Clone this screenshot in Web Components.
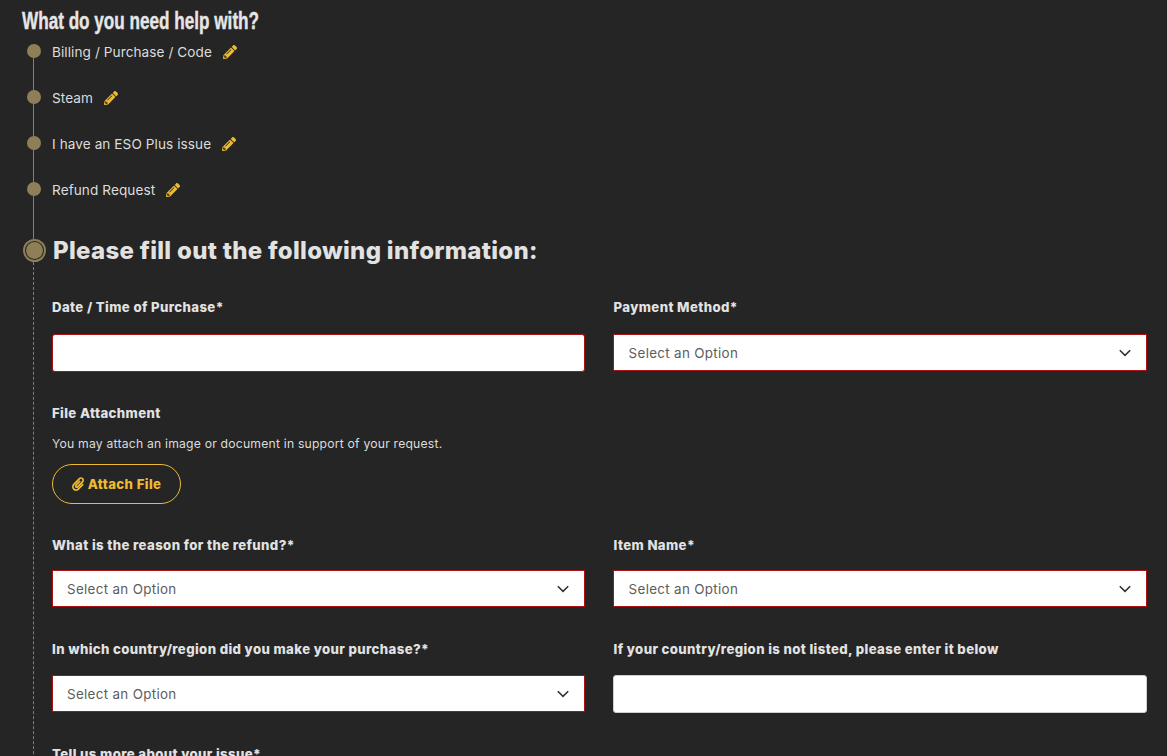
<!DOCTYPE html>
<html lang="en">
<head>
<meta charset="utf-8">
<title>What do you need help with?</title>
<style>
  html, body { margin: 0; height: 756px; overflow: hidden; background: #252525; }
  body { font-family: Inter, "Liberation Sans", sans-serif; color: #e2e2e2; }
</style>
</head>
<body>
<support-page>
  <tl-step>Billing / Purchase / Code</tl-step>
  <tl-step>Steam</tl-step>
  <tl-step>I have an ESO Plus issue</tl-step>
  <tl-step>Refund Request</tl-step>
  <tl-section title="Please fill out the following information:">
    <form-row top="0">
      <form-field label="Date / Time of Purchase*"><text-box invalid></text-box></form-field>
      <form-field label="Payment Method*"><select-box></select-box></form-field>
    </form-row>
    <attach-block></attach-block>
    <form-row top="33">
      <form-field gap="17" label="What is the reason for the refund?*"><select-box></select-box></form-field>
      <form-field gap="17" label="Item Name*"><select-box></select-box></form-field>
    </form-row>
    <form-row top="34">
      <form-field gap="18" label="In which country/region did you make your purchase?*"><select-box></select-box></form-field>
      <form-field gap="18" label="If your country/region is not listed, please enter it below"><text-box></text-box></form-field>
    </form-row>
    <form-row top="33">
      <form-field label="Tell us more about your issue*"><text-box invalid></text-box></form-field>
    </form-row>
  </tl-section>
</support-page>
<script>
const PENCIL = `<svg viewBox="0 0 512 512" width="14" height="14" fill="#edbb33"><path d="M497.9 142.1l-46.1 46.1c-4.7 4.7-12.3 4.7-17 0l-111-111c-4.7-4.7-4.7-12.3 0-17l46.1-46.1c18.7-18.7 49.1-18.7 67.9 0l60.1 60.1c18.8 18.7 18.8 49.1 0 67.9zM284.2 99.8L21.6 362.4.4 483.9c-2.9 16.4 11.4 30.6 27.8 27.8l121.5-21.3 262.6-262.6c4.7-4.7 4.7-12.3 0-17l-111-111c-4.8-4.7-12.4-4.7-17.1 0zM124.1 339.9c-5.5-5.5-5.5-14.3 0-19.8l154-154c5.5-5.5 14.3-5.5 19.8 0s5.5 14.3 0 19.8l-154 154c-5.5 5.5-14.3 5.5-19.8 0zM88 424h48v36.3l-64.5 11.3-31.1-31.1L51.7 376H88v48z"/></svg>`
const CLIP = `<svg viewBox="0 0 448 512" width="12" height="14" fill="#edbb33"><path d="M43.246 466.142c-58.43-60.289-57.341-157.511 1.386-217.581L254.392 34c44.316-45.332 116.351-45.336 160.671 0 43.89 44.894 43.943 117.329 0 162.276L232.214 383.128c-29.855 30.537-78.633 30.111-107.982-.998-28.275-29.97-27.368-77.473 1.452-106.953l143.743-146.835c6.182-6.314 16.312-6.422 22.626-.241l22.861 22.379c6.315 6.182 6.422 16.312.241 22.626L171.427 319.927c-4.932 5.045-5.236 13.428-.648 18.292 4.372 4.634 11.245 4.711 15.688.165l182.849-186.851c19.613-20.062 19.613-52.725-.011-72.798-19.189-19.627-49.957-19.637-69.154 0L90.39 293.295c-34.763 35.56-35.299 93.12-1.191 128.313 34.01 35.093 88.985 35.137 123.058.286l172.06-175.999c6.177-6.319 16.307-6.433 22.626-.256l22.877 22.364c6.319 6.177 6.434 16.307.256 22.626l-172.06 175.998c-59.576 60.938-155.943 60.216-214.77-.485z"/></svg>`

class SupportPage extends HTMLElement {
    constructor() {
        super();
        this.attachShadow({ mode: "open" });
        this.shadowRoot.innerHTML = /*html*/`
            <style>
                :host{ display:block; padding-right:20px; }
                h1{
                    margin:0 0 0 22px;
                    height:44px;
                    font:bold 23px/42px "Liberation Sans", sans-serif;
                    -webkit-text-stroke:.4px #e6e6e6;
                    color:#e6e6e6;
                    white-space:nowrap;
                    transform:scaleX(.745);
                    transform-origin:left center;
                }
            </style>
            <h1>What do you need help with?</h1>
            <slot></slot>
        `;
    }
}
customElements.define('support-page', SupportPage);

class TlStep extends HTMLElement {
    constructor() {
        super();
        this.attachShadow({ mode: "open" });
        this.shadowRoot.innerHTML = /*html*/`
            <style>
                :host{ display:flex; height:46px; margin-left:27px; gap:11px; }
                .gutter{ width:14px; display:flex; flex-direction:column; align-items:center; }
                .dot{ width:14px; height:14px; border-radius:50%; background:#8f7f57; flex:none; }
                .line{ width:1px; flex:1; background:#8f7f57; margin-right:1px; }
                .text{ display:flex; align-items:center; height:16px; font-size:13.6px; letter-spacing:.08px; color:#dcdcdc; gap:11px; }
                svg{ display:block; }
            </style>
            <div class="gutter"><div class="dot"></div><div class="line"></div></div>
            <div class="text"><span><slot></slot></span>${PENCIL}</div>
        `;
    }
}
customElements.define('tl-step', TlStep);

class TlSection extends HTMLElement {
    constructor() {
        super();
        this.attachShadow({ mode: "open" });
        this.shadowRoot.innerHTML = /*html*/`
            <style>
                :host{ display:grid; grid-template-columns:23px 1fr; margin-left:23px; column-gap:6px; }
                .stem{ grid-column:1; display:flex; flex-direction:column; align-items:flex-start; }
                .solid{ width:1px; height:11px; background:#8f7f57; margin-left:10px; }
                .ring{
                    width:23px; height:23px; box-sizing:border-box; border-radius:50%;
                    border:2px solid #8f7f57; padding:1px; flex:none;
                }
                .ring div{ width:100%; height:100%; border-radius:50%; background:#8f7f57; }
                .dash{ width:0; flex:1; border-left:1px dashed #8f7f57; margin-left:10px; }
                .body{ min-width:0; padding-top:11px; }
                h2{ margin:0 0 0 1px; font-size:24px; line-height:24px; font-weight:800; letter-spacing:.3px; color:#e2e2e2; white-space:nowrap; }
                .fields{ padding-top:36px; }
            </style>
            <div class="stem"><div class="solid"></div><div class="ring"><div></div></div><div class="dash"></div></div>
            <div class="body">
                <h2>${this.getAttribute("title")}</h2>
                <div class="fields"><slot></slot></div>
            </div>
        `;
    }
}
customElements.define('tl-section', TlSection);

class FormRow extends HTMLElement {
    constructor() {
        super();
        this.attachShadow({ mode: "open" });
        this.shadowRoot.innerHTML = /*html*/`
            <style>
                :host{ display:grid; grid-template-columns:533px 534px; column-gap:28px; }
                ::slotted(:nth-child(2)){ --nudge:.6px; }
            </style>
            <slot></slot>
        `;
        this.style.marginTop = (this.getAttribute("top") || 0) + "px";
    }
}
customElements.define('form-row', FormRow);

class FormField extends HTMLElement {
    constructor() {
        super();
        this.attachShadow({ mode: "open" });
        this.shadowRoot.innerHTML = /*html*/`
            <style>
                :host{ display:block; }
                label{ display:block; font-size:13.2px; line-height:16px; font-weight:800; letter-spacing:.38px; color:#e2e2e2; margin-bottom:${this.getAttribute("gap") || 19}px; padding-left:var(--nudge,0px); white-space:nowrap; }
            </style>
            <label>${this.getAttribute("label")}</label>
            <slot></slot>
        `;
    }
}
customElements.define('form-field', FormField);

class TextBox extends HTMLElement {
    constructor() {
        super();
        this.attachShadow({ mode: "open" });
        const border = this.hasAttribute("invalid") ? "#a81212" : "#cfcfcf";
        this.shadowRoot.innerHTML = /*html*/`
            <style>
                :host{ display:block; height:38px; box-sizing:border-box; background:#fff; border:1px solid ${border}; border-radius:3px; }
            </style>
        `;
    }
}
customElements.define('text-box', TextBox);

class SelectBox extends HTMLElement {
    constructor() {
        super();
        this.attachShadow({ mode: "open" });
        this.shadowRoot.innerHTML = /*html*/`
            <style>
                :host{
                    display:flex; align-items:center; justify-content:space-between;
                    height:37px; box-sizing:border-box; margin-top:1px; background:#fff;
                    border:1px solid #a81212; padding:0 15px 0 calc(14px + var(--nudge,0px));
                    font-size:13.4px; letter-spacing:.32px; color:#5c5c5c;
                }
                svg{ display:block; }
            </style>
            <span>Select an Option</span>
            <svg viewBox="0 0 12 8" width="12" height="8" fill="none" stroke="#333" stroke-width="1.6"><path d="M.8 1.2 6 6.4l5.2-5.2"/></svg>
        `;
    }
}
customElements.define('select-box', SelectBox);

class AttachBlock extends HTMLElement {
    constructor() {
        super();
        this.attachShadow({ mode: "open" });
        this.shadowRoot.innerHTML = /*html*/`
            <style>
                :host{ display:block; padding-top:33px; }
                h3{ margin:0; font-size:13.2px; line-height:16px; font-weight:800; letter-spacing:.38px; color:#e2e2e2; }
                p{ margin:15px 0 12px; font-size:12.2px; line-height:16px; letter-spacing:.2px; color:#dcdcdc; }
                button{
                    display:flex; align-items:center; justify-content:center; gap:4px;
                    width:129px; height:40px; padding:0; background:none;
                    border:1px solid #edbb33; border-radius:20px;
                    color:#edbb33; font:800 13.2px Inter, "Liberation Sans", sans-serif; letter-spacing:.4px;
                }
                svg{ display:block; }
            </style>
            <h3>File Attachment</h3>
            <p>You may attach an image or document in support of your request.</p>
            <button>${CLIP}<span>Attach File</span></button>
        `;
    }
}
customElements.define('attach-block', AttachBlock);
</script>
</body>
</html>
